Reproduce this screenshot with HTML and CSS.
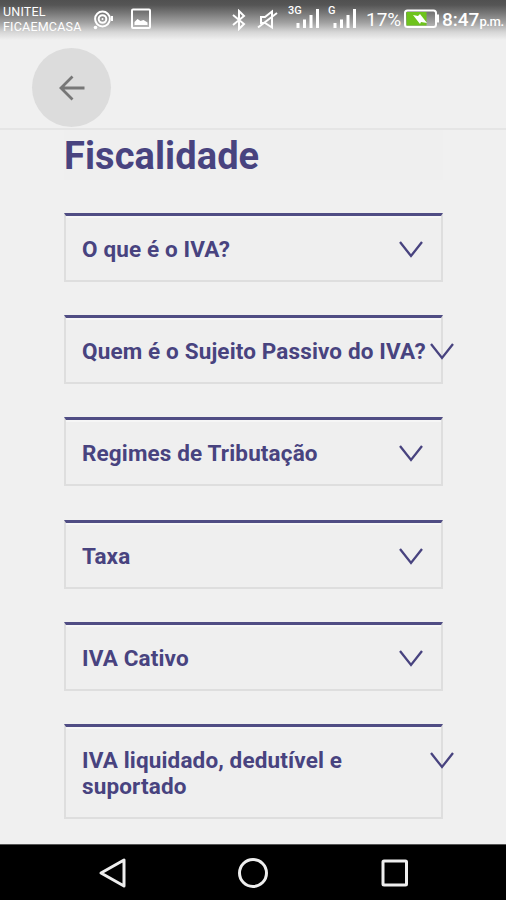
FILE: index.html
```html
<!DOCTYPE html>
<html lang="pt">
<head>
<meta charset="utf-8">
<title>Fiscalidade</title>
<link rel="stylesheet" href="styles.css">
</head>
<body>
<div class="status">
  <div class="carrier"><span>UNITEL</span><br><span>FICAEMCASA</span></div>
  <svg class="ic record" width="22" height="22" viewBox="0 0 22 22"><circle cx="10.5" cy="10" r="7.4"/><circle cx="10.5" cy="10" r="3.8"/><circle class="fill" cx="10.5" cy="10" r="1"/><circle class="fill" cx="3.5" cy="18.500" r="1.8"/><path d="M20 7v5"/></svg>
  <svg class="ic photo" width="20" height="22" viewBox="0 0 20 22"><rect x="1" y="1.5" width="18" height="18.5" rx="1"/><path class="fill" d="M3.5 17v-3l3-3 3 2 3-1 4 2.500v2.500z"/></svg>
  <svg class="ic bluetooth" width="14" height="22" viewBox="0 0 14 22"><path d="M1 6l11 9-5 5V2l5 5L1 16"/></svg>
  <svg class="ic mute" width="22" height="22" viewBox="0 0 22 22"><path d="M4 8h4l7-5.500v16L8 14H4zM1 18.500L20 4"/></svg>
  <div class="signal"><span class="net">3G</span><svg width="24" height="20" viewBox="0 0 24 20"><path d="M2 14v5M8.500 10.500v8.500M15 6v13M21.500 0v19"/></svg></div>
  <div class="signal second"><span class="net">G</span><svg width="24" height="20" viewBox="0 0 24 20"><path d="M2 14v5M8.500 10.500v8.500M15 6v13M21.500 0v19"/></svg></div>
  <span class="percent">17%</span>
  <svg class="battery" width="36" height="20" viewBox="0 0 36 20"><rect class="shell" x="1" y="1.500" width="31" height="16.500" rx="2.500"/><rect class="level" x="2.500" y="3" width="20" height="13.500"/><path class="cap" d="M34 5.500v8"/><path class="bolt" d="M9 6l5 1 2-2 7 9-6-1-1 2z"/></svg>
  <span class="time">8:47</span><span class="pm">p.m.</span>
</div>
<header class="toolbar">
  <button class="back" aria-label="Voltar"><svg width="28" height="28" viewBox="0 0 28 28"><path d="M26.500 14H3M14.500 2.500L3 14l11.500 11.500"/></svg></button>
</header>
<main class="content">
  <h1><span>Fiscalidade</span></h1>
  <section class="card"><h2>O que é o IVA?</h2><svg class="chev" viewBox="0 0 24 17"><path d="M1 1l11 14L23 1"/></svg></section>
  <section class="card wide"><h2>Quem é o Sujeito Passivo do IVA?</h2><svg class="chev" viewBox="0 0 24 17"><path d="M1 1l11 14L23 1"/></svg></section>
  <section class="card"><h2>Regimes de Tributação</h2><svg class="chev" viewBox="0 0 24 17"><path d="M1 1l11 14L23 1"/></svg></section>
  <section class="card"><h2>Taxa</h2><svg class="chev" viewBox="0 0 24 17"><path d="M1 1l11 14L23 1"/></svg></section>
  <section class="card"><h2>IVA Cativo</h2><svg class="chev" viewBox="0 0 24 17"><path d="M1 1l11 14L23 1"/></svg></section>
  <section class="card wide"><h2>IVA liquidado, dedutível e<br>suportado</h2><svg class="chev" viewBox="0 0 24 17"><path d="M1 1l11 14L23 1"/></svg></section>
</main>
<nav class="navbar">
  <svg width="30" height="32" viewBox="0 0 30 32"><path d="M26 3v26L3 16z"/></svg>
  <svg width="32" height="32" viewBox="0 0 32 32"><circle cx="16" cy="16" r="13.500"/></svg>
  <svg width="30" height="32" viewBox="0 0 30 32"><rect x="3" y="4" width="23.500" height="24" rx="1"/></svg>
</nav>
</body>
</html>
```
FILE: styles.css
```css
* { box-sizing: border-box; }
body {
  margin: 0;
  width: 506px;
  height: 900px;
  display: flex;
  flex-direction: column;
  overflow: hidden;
  background: #f0f0f0;
  font-family: Roboto, "Liberation Sans", sans-serif;
}
svg { display: block; flex: none; fill: none; }
.status {
  height: 42px;
  flex: none;
  display: flex;
  align-items: flex-start;
  white-space: nowrap;
  color: #fff;
  background: linear-gradient(#505050 0, #555 5px, #777 13px, #a3a3a3 23px, #d6d6d6 32px, #f0f0f0 40px);
}
.carrier {
  width: 92px;
  flex: none;
  padding: 5px 0 0 3px;
  font-size: 12.5px;
  line-height: 14.5px;
  letter-spacing: 0.2px;
}
.ic, .signal svg { stroke: #fff; stroke-width: 2; }
.ic .fill { fill: #fff; stroke: none; }
.record { margin-top: 9px; }
.photo { margin: 8px 0 0 17px; }
.bluetooth { margin: 9px 0 0 81px; }
.mute { margin: 9px 0 0 11px; }
.signal { width: 40px; flex: none; margin-left: 9px; display: flex; padding-top: 9px; }
.signal svg { stroke-width: 3; margin-left: -7px; }
.signal .net { width: 15px; margin-top: -4px; font-size: 11px; line-height: 12px; font-weight: 500; }
.signal.second { width: 38px; margin-left: 0; }
.signal.second .net { width: 8px; }
.signal.second svg { margin-left: -3px; }
.percent { width: 37px; flex: none; font-size: 19px; line-height: 24px; padding-top: 8px; }
.battery { margin: 9px 0 0 1px; }
.shell, .cap { stroke: #fff; stroke-width: 2; }
.level { fill: #6ec31c; }
.bolt { fill: #fff; }
.time { margin-left: 2px; padding-top: 8px; font-size: 19px; line-height: 24px; font-weight: 500; }
.pm { padding-top: 11px; font-size: 13px; line-height: 22px; font-weight: 500; letter-spacing: -0.4px; }
.toolbar {
  height: 88px;
  flex: none;
  padding: 6px 0 0 32px;
  border-bottom: 2px solid #e5e5e5;
}
.back {
  width: 79px;
  height: 79px;
  padding: 0;
  border: 0;
  border-radius: 50%;
  background: #dcdcdc;
  display: flex;
  align-items: center;
  justify-content: center;
}
.back path { stroke: #777; stroke-width: 2.8; }
.content { height: 714px; padding: 0 63px 0 64px; color: #48437f; }
h1 {
  height: 50px;
  margin: 0 0 33px;
  padding-top: 1px;
  font-size: 38px;
  line-height: 50px;
  font-weight: 700;
  letter-spacing: 0.08px;
  background: #efefef;
}
.card {
  min-height: 69px;
  margin-bottom: 33.2px;
  padding: 20px 18px 0 16px;
  display: flex;
  justify-content: space-between;
  align-items: flex-start;
  border: 2px solid #dedede;
  border-top: 3px solid #504d84;
  box-shadow: inset 0 2px #f6f6f6;
  background: #efefef;
}
.card:last-child { min-height: 94px; }
h2 {
  margin: 0 0 17px;
  font-size: 22.5px;
  line-height: 26.5px;
  font-weight: 700;
  letter-spacing: 0.14px;
  white-space: nowrap;
}
.card .chev { width: 24px; height: 17px; margin: 5px 0 0; }
.card.wide .chev { margin-right: -31px; }
.chev path { stroke: #48437f; stroke-width: 2.3; }
.navbar {
  height: 56px;
  flex: none;
  margin-top: auto;
  padding: 0 96px 0 98px;
  display: flex;
  justify-content: space-between;
  align-items: center;
  background: #000;
  border-top: 1px solid #555;
}
.navbar svg { stroke: #eee; stroke-width: 3; stroke-linejoin: round; }
.navbar svg:nth-child(2) { margin-left: -3px; }
```
